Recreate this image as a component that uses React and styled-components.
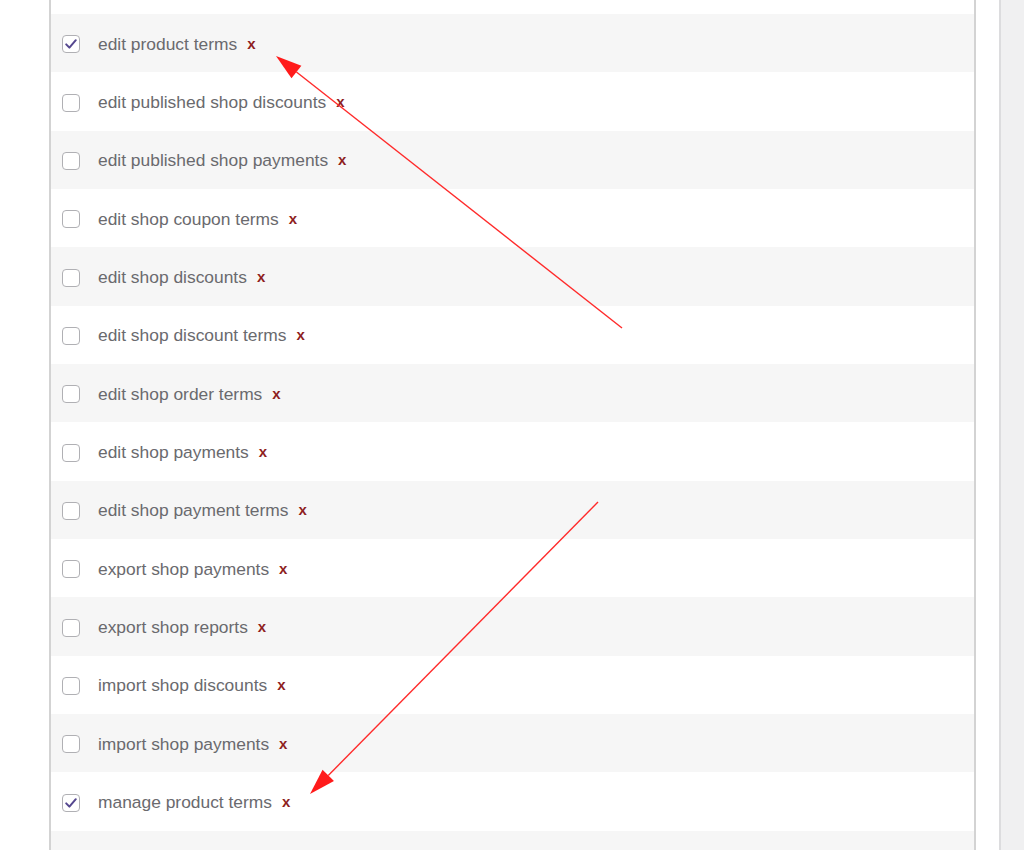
import React from "react";
import styled, { createGlobalStyle } from "styled-components";

const Global = createGlobalStyle`
  html, body { margin: 0; padding: 0; }
  body { background: #f0f0f1; font-family: "Liberation Sans", Arial, sans-serif; }
`;

const Page = styled.div`
  position: relative;
  display: flex;
  height: 850px;
  overflow: hidden;
  background: #f0f0f1;
`;

const Main = styled.div`
  width: 1001px;
  flex: none;
  background: #ffffff;
  border-right: 2px solid #dcdcde;
  box-sizing: border-box;
  padding: 0 23px 0 49px;
`;

const Panel = styled.div`
  display: flex;
  flex-direction: column;
  border-left: 2px solid #d3d3d3;
  border-right: 2px solid #d3d3d3;
  padding-top: 14px;
  height: 100%;
  box-sizing: border-box;
`;

const Row = styled.label`
  display: flex;
  align-items: center;
  flex: none;
  height: 58.35px;
  box-sizing: border-box;
  padding: 2px 0 0 11px;
  background: ${(p) => (p.$striped ? "#f6f6f6" : "#ffffff")};
`;

const Filler = styled.div`
  flex: 1;
  background: #f6f6f6;
`;

const Box = styled.span`
  width: 18px;
  height: 18px;
  flex: none;
  box-sizing: border-box;
  border: 1px solid #b0b0b4;
  border-radius: 4px;
  background: #fff;
  display: flex;
  align-items: center;
  justify-content: center;
  margin-right: 18px;
`;

const Label = styled.span`
  font-size: 17.4px;
  color: #6a6a6e;
`;

const Remove = styled.span`
  margin-left: 10px;
  font-size: 15px;
  font-weight: bold;
  color: #8e1e1e;
  transform: translateY(-1px);
`;

const Overlay = styled.svg`
  position: absolute;
  left: 0;
  top: 0;
  pointer-events: none;
`;

const items = [
  ["edit product terms", true],
  ["edit published shop discounts", false],
  ["edit published shop payments", false],
  ["edit shop coupon terms", false],
  ["edit shop discounts", false],
  ["edit shop discount terms", false],
  ["edit shop order terms", false],
  ["edit shop payments", false],
  ["edit shop payment terms", false],
  ["export shop payments", false],
  ["export shop reports", false],
  ["import shop discounts", false],
  ["import shop payments", false],
  ["manage product terms", true],
];

const Check = () => (
  <svg width="14" height="14" viewBox="0 0 14 14">
    <path d="M2.2 7.4 L5.4 10.6 L11.8 3.2" fill="none" stroke="#55478f" strokeWidth="2" strokeLinecap="round" strokeLinejoin="round" />
  </svg>
);

function Arrow({ x1, y1, x2, y2 }) {
  const dx = x2 - x1;
  const dy = y2 - y1;
  const len = Math.hypot(dx, dy);
  const ux = dx / len;
  const uy = dy / len;
  const hl = 26;
  const hw = 8;
  const bx = x2 - ux * hl;
  const by = y2 - uy * hl;
  const px = -uy;
  const py = ux;
  const pts = `${x2},${y2} ${bx + px * hw},${by + py * hw} ${bx - px * hw},${by - py * hw}`;
  return (
    <g>
      <line x1={x1} y1={y1} x2={bx} y2={by} stroke="#ff2a2a" strokeWidth="1.4" />
      <polygon points={pts} fill="#ff1a1a" />
    </g>
  );
}

export default function App() {
  return (
    <>
      <Global />
      <Page>
        <Main>
          <Panel>
            {items.map(([t, c], i) => (
              <Row key={t} $striped={i % 2 === 0}>
                <Box>{c && <Check />}</Box>
                <Label>{t}</Label>
                <Remove>x</Remove>
              </Row>
            ))}
            <Filler />
          </Panel>
        </Main>
        <Overlay width="1024" height="850">
          <Arrow x1={622} y1={328} x2={276} y2={56} />
          <Arrow x1={598} y1={502} x2={310} y2={794} />
        </Overlay>
      </Page>
    </>
  );
}
